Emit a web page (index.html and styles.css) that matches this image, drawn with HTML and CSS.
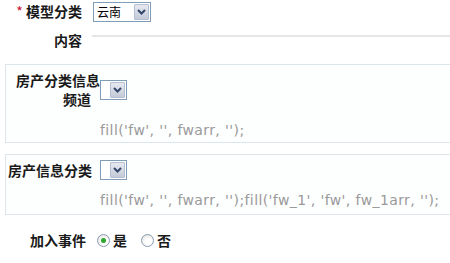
FILE: index.html
```html
<!DOCTYPE html>
<html>
<head>
<meta charset="utf-8">
<link rel="stylesheet" href="styles.css">
</head>
<body>
<div class="form">
  <div class="row r-model">
    <div class="lbl"><span class="req">*</span> 模型分类</div>
    <div class="sel sel-wide">
      <span class="val">云南</span>
      <span class="btn"><svg width="9" height="6" viewBox="0 0 9 6"><polyline points="1,1 4.5,4.5 8,1" fill="none" stroke="#34466a" stroke-width="2"/></svg></span>
    </div>
  </div>
  <div class="row r-content">
    <div class="lbl">内容</div>
    <div class="rule"></div>
  </div>
  <div class="box box1">
    <div class="field">
      <div class="lbl2 lbl2-a">房产分类信息<br>频道</div>
      <div class="sel sel-small">
        <span class="val"></span>
        <span class="btn"><svg width="9" height="6" viewBox="0 0 9 6"><polyline points="1,1 4.5,4.5 8,1" fill="none" stroke="#34466a" stroke-width="2"/></svg></span>
      </div>
    </div>
    <div class="code code1">fill('fw', '', fwarr, '');</div>
  </div>
  <div class="box box2">
    <div class="field">
      <div class="lbl2 lbl2-b">房产信息分类</div>
      <div class="sel sel-small">
        <span class="val"></span>
        <span class="btn"><svg width="9" height="6" viewBox="0 0 9 6"><polyline points="1,1 4.5,4.5 8,1" fill="none" stroke="#34466a" stroke-width="2"/></svg></span>
      </div>
    </div>
    <div class="code code2">fill('fw', '', fwarr, '');fill('fw_1', 'fw', fw_1arr, '');</div>
  </div>
  <div class="row r-event">
    <div class="lbl lbl-event">加入事件</div>
    <span class="radio checked"></span><span class="opt">是</span>
    <span class="radio"></span><span class="opt">否</span>
  </div>
</div>
</body>
</html>
```
FILE: styles.css
```css
html, body {
  margin: 0;
  padding: 0;
  background: #ffffff;
}
body {
  width: 450px;
  height: 263px;
  overflow: hidden;
  font-family: "Noto Sans CJK SC", "DejaVu Sans", sans-serif;
  color: #1a1a1a;
}
.form {
  display: flex;
  flex-direction: column;
}
.row {
  display: flex;
}
.lbl {
  width: 82px;
  text-align: right;
  font-size: 14px;
  font-weight: bold;
  line-height: 19px;
  white-space: nowrap;
}
.req {
  color: #c8102e;
  font-weight: normal;
}
.r-model {
  height: 22px;
  align-items: center;
  padding-top: 1px;
  box-sizing: border-box;
}
.r-model .lbl {
  margin-top: -1px;
}
.sel {
  display: flex;
  box-sizing: border-box;
  height: 20px;
  border: 1px solid #7f9db9;
  background: #ffffff;
  padding: 1px;
}
.sel-wide {
  width: 58px;
  margin-left: 11px;
}
.sel-small {
  width: 27px;
  margin-left: 9px;
}
.val {
  flex: 1;
  font-size: 12px;
  line-height: 16px;
  padding-left: 2px;
  color: #000;
}
.btn {
  width: 15px;
  height: 16px;
  box-sizing: border-box;
  border: 1px solid #b5bfd2;
  border-radius: 1px;
  background: linear-gradient(#e6e9f0, #c3cad8);
  display: flex;
  align-items: center;
  justify-content: center;
}
.r-content {
  margin-top: 9px;
  align-items: flex-start;
}
.rule {
  flex: 1;
  height: 2px;
  margin-top: 4px;
  margin-left: 10px;
  background: #e6e6e6;
}
.box {
  margin-left: 5px;
  border: 1px solid #dce5ea;
  border-right: none;
  background: #fdfefe;
}
.box1 {
  margin-top: 14px;
  padding: 6px 0 4px 0;
}
.box2 {
  margin-top: 11px;
  padding: 5px 0 6px 0;
}
.field {
  display: flex;
  align-items: center;
}
.lbl2 {
  font-size: 14px;
  font-weight: bold;
  line-height: 19px;
  text-align: right;
  white-space: nowrap;
}
.lbl2-a {
  margin-left: 10px;
  width: 75px;
}
.lbl2-b {
  margin-left: 2px;
  width: 83px;
}
.code {
  padding-left: 94px;
  font-family: "DejaVu Sans", sans-serif;
  font-size: 14px;
  letter-spacing: 0.4px;
  line-height: 16px;
  color: #9a9a9a;
  white-space: nowrap;
}
.code1 {
  margin-top: 13px;
}
.code2 {
  margin-top: 12px;
}
.r-event {
  margin-top: 15px;
  align-items: center;
  height: 20px;
}
.lbl-event {
  width: 86px;
}
.radio {
  width: 13px;
  height: 13px;
  box-sizing: border-box;
  border-radius: 50%;
  border: 1px solid #8a9bb3;
  background: radial-gradient(circle at 60% 65%, #ffffff 30%, #dcdcd6 100%);
  margin-left: 11px;
  display: flex;
  align-items: center;
  justify-content: center;
}
.radio.checked::after {
  content: "";
  width: 5px;
  height: 5px;
  border-radius: 50%;
  background: #2ea52e;
}
.opt {
  font-size: 14px;
  font-weight: bold;
  line-height: 19px;
  margin-left: 3px;
}
.opt + .radio {
  margin-left: 14px;
}
```
